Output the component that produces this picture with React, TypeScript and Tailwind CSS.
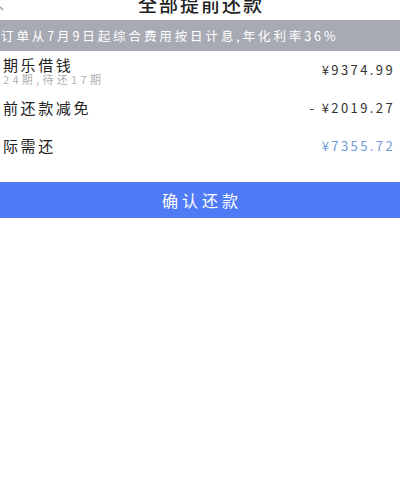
import React from "react";

const font = { fontFamily: '"Noto Sans CJK SC", "Noto Sans", sans-serif' };

export default function App() {
  return (
    <div className="w-[400px] h-[491px] bg-white overflow-hidden relative" style={font}>
      {/* header */}
      <div className="relative h-[32px] -mt-[12px] flex items-center justify-center">
        <svg className="absolute left-[-8px] top-[4px]" width="14" height="20" viewBox="0 0 14 20">
          <path d="M11 2 L3 10 L11 18" fill="none" stroke="#a0a0a0" strokeWidth="1.5" />
        </svg>
        <span className="text-[19px] leading-[20px] font-medium text-[#222] tracking-[2px] pl-[2px]">
          全部提前还款
        </span>
      </div>
      {/* banner */}
      <div className="h-[31px] bg-[#a8aab3] flex items-center pl-[1px]">
        <span className="text-[12.5px] leading-[13px] text-white tracking-[2.9px] whitespace-nowrap">
          订单从7月9日起综合费用按日计息,年化利率36%
        </span>
      </div>
      {/* rows */}
      <div className="h-[37px] flex items-center justify-between pl-[3px] pr-[5px]">
        <div className="flex flex-col gap-[2px] pt-[3px]">
          <span className="text-[15px] leading-[15px] text-[#222] tracking-[2.6px]">期乐借钱</span>
          <span className="text-[11px] leading-[11px] text-[#b0b0b0] tracking-[3.3px]">
            24期,待还17期
          </span>
        </div>
        <span className="text-[13px] leading-[13px] text-[#333] tracking-[2.4px]">¥9374.99</span>
      </div>
      <div className="h-[39px] flex items-center justify-between pl-[3px] pr-[5px]">
        <span className="text-[15px] leading-[15px] text-[#222] tracking-[2.6px]">前还款减免</span>
        <span className="text-[13px] leading-[13px] text-[#333] tracking-[2.4px]">- ¥2019.27</span>
      </div>
      <div className="h-[37px] flex items-center justify-between pl-[3px] pr-[5px]">
        <span className="text-[15px] leading-[15px] text-[#222] tracking-[2.6px]">际需还</span>
        <span className="text-[13px] leading-[13px] text-[#6f9ad8] tracking-[2.4px]">¥7355.72</span>
      </div>
      {/* button */}
      <div className="mt-[18px] h-[36px] bg-[#4f7bf7] flex items-center justify-center">
        <span className="text-[16px] leading-[16px] text-white tracking-[4px] pl-[4px]">确认还款</span>
      </div>
    </div>
  );
}
